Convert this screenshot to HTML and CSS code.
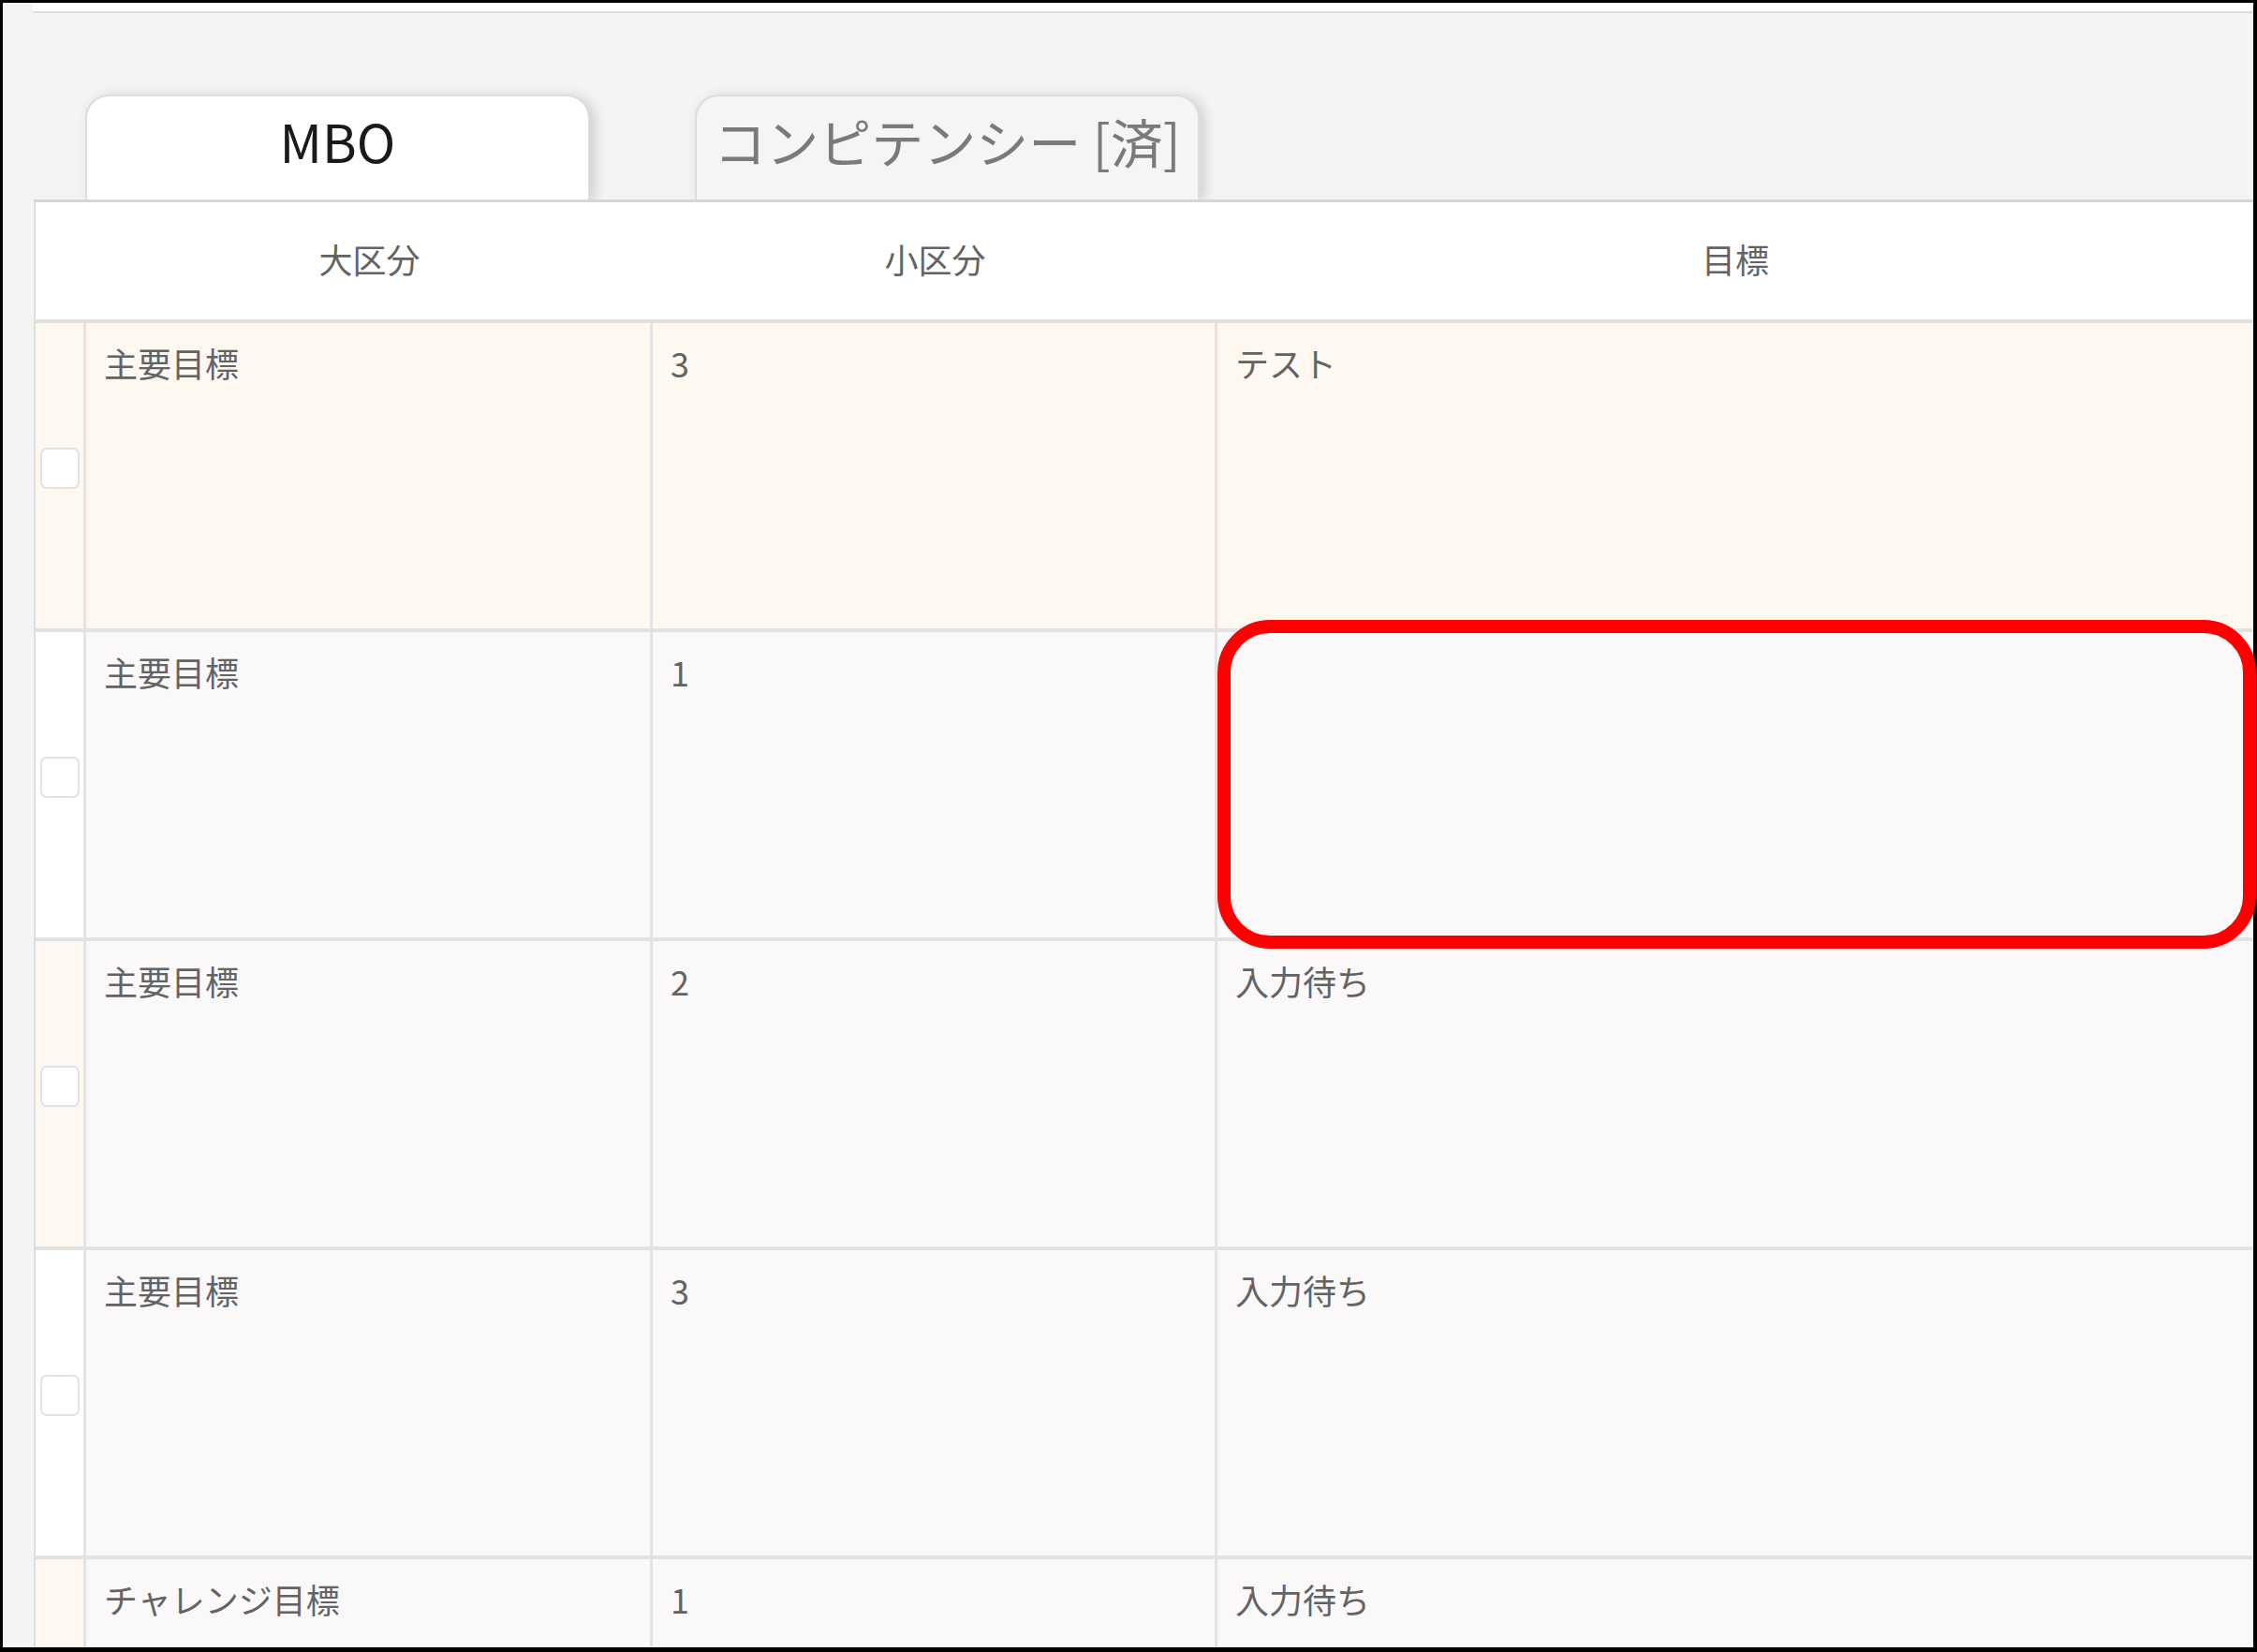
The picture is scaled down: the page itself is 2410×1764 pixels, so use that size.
FILE: index.html
```html
<!DOCTYPE html>
<html lang="ja">
<head>
<meta charset="utf-8">
<title>MBO</title>
<link rel="stylesheet" href="styles.css">
</head>
<body>
<div class="frame">
  <div class="viewport">
    <div class="topbar"></div>
    <div class="tabs">
      <div class="tab tab-active">MBO</div>
      <div class="tab tab-inactive">コンピテンシー [済]</div>
    </div>
    <div class="table">
      <div class="thead">
        <div class="th"></div>
        <div class="th">大区分</div>
        <div class="th">小区分</div>
        <div class="th">目標</div>
      </div>
      <div class="row row-selected">
        <div class="cell cb cb-cream"><span class="checkbox"></span></div>
        <div class="cell">主要目標</div>
        <div class="cell">3</div>
        <div class="cell last">テスト</div>
      </div>
      <div class="row">
        <div class="cell cb cb-white"><span class="checkbox"></span></div>
        <div class="cell">主要目標</div>
        <div class="cell">1</div>
        <div class="cell last"></div>
      </div>
      <div class="row">
        <div class="cell cb cb-cream"><span class="checkbox"></span></div>
        <div class="cell">主要目標</div>
        <div class="cell">2</div>
        <div class="cell last">入力待ち</div>
      </div>
      <div class="row">
        <div class="cell cb cb-white"><span class="checkbox"></span></div>
        <div class="cell">主要目標</div>
        <div class="cell">3</div>
        <div class="cell last">入力待ち</div>
      </div>
      <div class="row">
        <div class="cell cb cb-cream"><span class="checkbox"></span></div>
        <div class="cell">チャレンジ目標</div>
        <div class="cell">1</div>
        <div class="cell last">入力待ち</div>
      </div>
    </div>
  </div>
  <div class="highlight"></div>
</div>
</body>
</html>
```

FILE: styles.css
```css
html, body {
  margin: 0;
  padding: 0;
  background: #ffffff;
}

.frame {
  position: relative;
  width: 2410px;
  height: 1764px;
  box-sizing: border-box;
  border: 3px solid #000000;
  border-right-width: 4px;
  border-bottom-width: 5px;
  background: #f4f4f4;
  font-family: "Noto Sans CJK JP", "Noto Sans", sans-serif;
}

.viewport {
  height: 100%;
  overflow: hidden;
}

.topbar {
  margin-left: 32px;
  height: 9px;
  background: #ffffff;
  border-bottom: 2px solid #dcdcdc;
}

.tabs {
  display: flex;
  gap: 112px;
  padding-top: 87px;
  padding-left: 88px;
  position: relative;
  z-index: 1;
}

.tab {
  width: 539px;
  height: 112px;
  box-sizing: border-box;
  border: 2px solid #dddddd;
  border-bottom: none;
  border-radius: 25px 25px 0 0;
  display: flex;
  align-items: center;
  justify-content: center;
  padding-bottom: 18px;
  font-size: 56px;
  white-space: nowrap;
  box-shadow: 5px 2px 14px rgba(0, 0, 0, 0.16);
}

.tab-active {
  background: #ffffff;
  color: #1a1a1a;
}

.tab-inactive {
  background: #f5f5f5;
  color: #7a7a7a;
}

.table {
  margin-left: 33px;
  background: #ffffff;
  border-left: 2px solid #dddddd;
  border-top: 3px solid #d6d6d6;
  position: relative;
  z-index: 2;
  font-size: 36px;
  line-height: 1.5;
  color: #636363;
}

.thead,
.row {
  display: grid;
  grid-template-columns: 54px 605px 603px 1fr;
}

.thead {
  height: 129px;
  box-sizing: border-box;
  border-bottom: 4px solid #e0e0e0;
  background: #ffffff;
}

.th {
  display: flex;
  align-items: center;
  justify-content: center;
  padding-bottom: 6px;
}

.row {
  height: 330px;
  box-sizing: border-box;
  border-bottom: 4px solid #e2e2e2;
}

.cell {
  background: #fbf8f9;
  border-right: 3px solid #e3e3e3;
  padding: 15px 19px 0;
  white-space: nowrap;
}

.cell.last {
  border-right: none;
}

.row-selected .cell {
  background: #fef8f1;
}

.cell.cb {
  padding: 0 0 16px;
  display: flex;
  align-items: center;
  justify-content: center;
}

.cell.cb-cream {
  background: #fef8f1;
}

.cell.cb-white {
  background: #ffffff;
}

.checkbox {
  display: block;
  width: 42px;
  height: 44px;
  box-sizing: border-box;
  background: #ffffff;
  border: 2px solid #e2e2e2;
  border-radius: 7px;
}

.highlight {
  position: absolute;
  left: 1297px;
  top: 659px;
  width: 1109px;
  height: 351px;
  box-sizing: border-box;
  border: 14px solid #ff0000;
  border-radius: 56px;
  z-index: 5;
}
```
